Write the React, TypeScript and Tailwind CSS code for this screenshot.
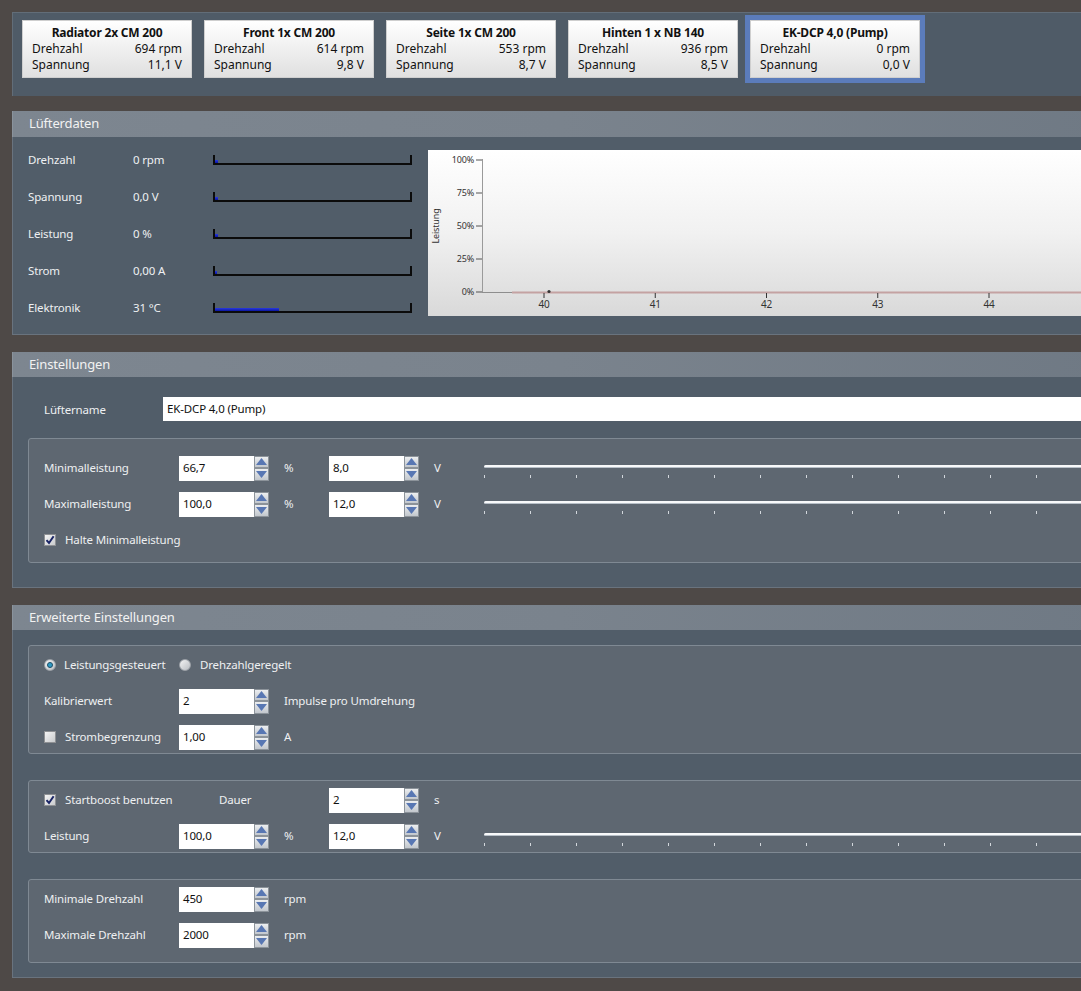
import React from 'react';

const FONT = '"Noto Sans", "Open Sans", Arial, sans-serif';

const fans = [
  { name: 'Radiator 2x CM 200', rpm: '694 rpm', volt: '11,1 V' },
  { name: 'Front 1x CM 200', rpm: '614 rpm', volt: '9,8 V' },
  { name: 'Seite 1x CM 200', rpm: '553 rpm', volt: '8,7 V' },
  { name: 'Hinten 1 x NB 140', rpm: '936 rpm', volt: '8,5 V' },
  { name: 'EK-DCP 4,0 (Pump)', rpm: '0 rpm', volt: '0,0 V', active: true },
];

const readings = [
  { label: 'Drehzahl', value: '0 rpm', fill: 3 },
  { label: 'Spannung', value: '0,0 V', fill: 3 },
  { label: 'Leistung', value: '0 %', fill: 3 },
  { label: 'Strom', value: '0,00 A', fill: 2 },
  { label: 'Elektronik', value: '31 °C', fill: 64 },
];

function FanCard({ name, rpm, volt, active }: { name: string; rpm: string; volt: string; active?: boolean }) {
  return (
    <div
      className={
        'w-[170px] h-[58px] shrink-0 bg-gradient-to-b from-white to-[#e0e0e0] border border-[#cfcfcf] px-[9px] pt-[4px] text-[12px] leading-[16px] text-[#111] ' +
        (active ? 'ring-[5px] ring-[#5b7cbb]' : '')
      }
    >
      <div className="text-center font-bold tracking-[-0.2px]">{name}</div>
      <div className="flex justify-between">
        <span>Drehzahl</span>
        <span>{rpm}</span>
      </div>
      <div className="flex justify-between">
        <span>Spannung</span>
        <span>{volt}</span>
      </div>
    </div>
  );
}

function PanelHeader({ title, h = 'h-[25px]' }: { title: string; h?: string }) {
  return (
    <div
      className={
        h +
        ' flex items-center pl-[16px] bg-gradient-to-r from-[#7d8690] via-[#7a838d] to-[#6f7984] border-l border-[#8a939c] text-[13px] text-[#f2f2f2]'
      }
    >
      {title}
    </div>
  );
}

function Meter({ fill }: { fill: number }) {
  return (
    <div className="relative w-[199px] h-[10px] border-l-2 border-r-2 border-b-2 border-[#0b0b0b]">
      <div className="absolute left-0 bottom-0 h-[3px] bg-gradient-to-b from-[#2a3ae0] to-[#0a14a0]" style={{ width: fill }} />
    </div>
  );
}

function Chart() {
  const xs = [40, 41, 42, 43, 44];
  const ys = [
    { t: '100%', y: 10 },
    { t: '75%', y: 43 },
    { t: '50%', y: 76 },
    { t: '25%', y: 109 },
    { t: '0%', y: 142 },
  ];
  return (
    <div className="mt-[13px] w-[660px] h-[166px] bg-gradient-to-b from-white via-[#f1f1f1] to-[#d9d9d9]">
      <svg width="660" height="166" viewBox="0 0 660 166" style={{ fontFamily: FONT }}>
        <text x="11" y="76" fontSize="9" fill="#333" textAnchor="middle" transform="rotate(-90 11 76)">
          Leistung
        </text>
        {ys.map((r) => (
          <g key={r.t}>
            <text x="46" y={r.y + 3} fontSize="9" fill="#333" textAnchor="end">
              {r.t}
            </text>
            <line x1="48" x2="54" y1={r.y} y2={r.y} stroke="#555" strokeWidth="1" />
          </g>
        ))}
        <line x1="54.5" x2="54.5" y1="9" y2="142" stroke="#9a9a9a" strokeWidth="1" />
        <line x1="54" x2="84" y1="142.5" y2="142.5" stroke="#8e8e8e" strokeWidth="1" />
        <line x1="84" x2="660" y1="142.5" y2="142.5" stroke="#c4a2a2" strokeWidth="2" />
        <circle cx="121" cy="141.5" r="1.6" fill="#333" />
        {xs.map((v, i) => {
          const x = 116 + i * 111.25;
          return (
            <g key={v}>
              <line x1={x} x2={x} y1="143" y2="148" stroke="#333" strokeWidth="1" />
              <text x={x} y="158" fontSize="10" fill="#333" textAnchor="middle">
                {v}
              </text>
            </g>
          );
        })}
      </svg>
    </div>
  );
}

function Spinner({ value }: { value: string }) {
  return (
    <div className="flex h-[25px] w-[90px] shrink-0">
      <div className="w-[75px] h-full bg-white pl-[4px] flex items-center text-[#111]">{value}</div>
      <div className="w-[15px] h-full flex flex-col">
        {[0, 1].map((d) => (
          <div
            key={d}
            className="h-1/2 flex items-center justify-center bg-gradient-to-b from-[#eceef0] to-[#c2c7cd] border border-[#8c939a]"
          >
            <svg width="11" height="7" viewBox="0 0 11 7">
              <polygon points={d === 0 ? '0,7 5.5,0 11,7' : '0,0 5.5,7 11,0'} fill="#5877b3" />
            </svg>
          </div>
        ))}
      </div>
    </div>
  );
}

function Check({ checked }: { checked?: boolean }) {
  return (
    <div className="w-[12px] h-[12px] shrink-0 border border-[#8f9194] bg-gradient-to-br from-[#f4f4f4] to-[#c9cbcd] flex items-center justify-center">
      {checked && (
        <svg width="10" height="10" viewBox="0 0 10 10">
          <path d="M1.5 5.2 L4 8 L8.6 1.2" stroke="#1a2566" strokeWidth="2" fill="none" />
        </svg>
      )}
    </div>
  );
}

function Radio({ checked }: { checked?: boolean }) {
  return (
    <div className="w-[12px] h-[12px] shrink-0 rounded-full border border-[#9da2a8] bg-gradient-to-br from-[#f4f4f4] to-[#b9bdc2] flex items-center justify-center">
      {checked && <div className="w-[6px] h-[6px] rounded-full bg-[#2f9ac4] border border-[#1d4d66]" />}
    </div>
  );
}

function Slider() {
  return (
    <div className="flex-1 h-full flex flex-col pt-[10px]">
      <div className="h-[3px] bg-[#f8f9fa] rounded-l-full border-b border-[#b8c0c8]" />
      <div className="mt-[7px] flex">
        {Array.from({ length: 14 }).map((_, i) => (
          <div key={i} className="w-[46px] h-[3px] border-l border-[#d2d7dc] shrink-0" />
        ))}
      </div>
    </div>
  );
}

function Row({ children }: { children: React.ReactNode }) {
  return <div className="h-[26px] flex items-center">{children}</div>;
}

function Label({ children, w = 'w-[135px]' }: { children: React.ReactNode; w?: string }) {
  return <div className={w + ' shrink-0 whitespace-nowrap flex items-center'}>{children}</div>;
}

function Unit({ children, w = 'w-[60px]' }: { children?: React.ReactNode; w?: string }) {
  return <div className={w + ' shrink-0 pl-[15px] whitespace-nowrap'}>{children}</div>;
}

function Group({ children, className }: { children: React.ReactNode; className: string }) {
  return (
    <div className={'border border-[#7f8993] rounded-[3px] bg-[#5e6771] pl-[15px] flex flex-col gap-[10px] ' + className}>
      {children}
    </div>
  );
}

export default function App() {
  return (
    <div
      className="w-[1081px] h-[991px] overflow-hidden bg-[#4e4947] pl-[12px] pt-[12px] text-[11.5px] tracking-[-0.15px] text-[#eef0f2]"
      style={{ fontFamily: FONT }}
    >
      <div className="w-[1100px]">
        {/* fan tiles */}
        <div className="h-[84px] bg-[#4f5b67] border-t border-l border-[#626d78] flex gap-[12px] pl-[9px] pt-[7px] tracking-normal">
          {fans.map((f) => (
            <FanCard key={f.name} {...f} />
          ))}
        </div>

        {/* Lüfterdaten */}
        <div className="mt-[15px]">
          <PanelHeader title="Lüfterdaten" h="h-[26px]" />
          <div className="h-[198px] bg-[#515d69] border-l border-b border-[#69737e] flex">
            <div className="w-[415px] shrink-0 pl-[15px] pt-[15px] flex flex-col gap-[21px]">
              {readings.map((r) => (
                <div key={r.label} className="h-[16px] flex items-center">
                  <div className="w-[105px]">{r.label}</div>
                  <div className="w-[80px]">{r.value}</div>
                  <Meter fill={r.fill} />
                </div>
              ))}
            </div>
            <Chart />
          </div>
        </div>

        {/* Einstellungen */}
        <div className="mt-[17px]">
          <PanelHeader title="Einstellungen" />
          <div className="h-[211px] bg-[#515d69] border-l border-b border-[#69737e] pl-[15px] pt-[20px]">
            <div className="h-[24px] flex items-center">
              <div className="w-[135px] pl-[16px] pt-[2px] shrink-0">Lüftername</div>
              <div className="flex-1 h-full bg-white pl-[4px] flex items-center text-[#111]">EK-DCP 4,0 (Pump)</div>
            </div>
            <Group className="mt-[17px] h-[125px] pt-[16px]">
              <Row>
                <Label>Minimalleistung</Label>
                <Spinner value="66,7" />
                <Unit>%</Unit>
                <Spinner value="8,0" />
                <Unit w="w-[65px]">V</Unit>
                <Slider />
              </Row>
              <Row>
                <Label>Maximalleistung</Label>
                <Spinner value="100,0" />
                <Unit>%</Unit>
                <Spinner value="12,0" />
                <Unit w="w-[65px]">V</Unit>
                <Slider />
              </Row>
              <Row>
                <Label>
                  <Check checked />
                  <span className="ml-[9px]">Halte Minimalleistung</span>
                </Label>
              </Row>
            </Group>
          </div>
        </div>

        {/* Erweiterte Einstellungen */}
        <div className="mt-[17px]">
          <PanelHeader title="Erweiterte Einstellungen" />
          <div className="h-[348px] bg-[#515d69] border-l border-b border-[#69737e] pl-[15px] pt-[15px]">
            <Group className="h-[109px] pt-[6px]">
              <Row>
                <Label>
                  <Radio checked />
                  <span className="ml-[8px]">Leistungsgesteuert</span>
                </Label>
                <Radio />
                <span className="ml-[9px]">Drehzahlgeregelt</span>
              </Row>
              <Row>
                <Label>Kalibrierwert</Label>
                <Spinner value="2" />
                <Unit w="w-[200px]">Impulse pro Umdrehung</Unit>
              </Row>
              <Row>
                <Label>
                  <Check />
                  <span className="ml-[9px]">Strombegrenzung</span>
                </Label>
                <Spinner value="1,00" />
                <Unit>A</Unit>
              </Row>
            </Group>

            <Group className="mt-[26px] h-[73px] pt-[6px]">
              <Row>
                <Label>
                  <Check checked />
                  <span className="ml-[9px]">Startboost benutzen</span>
                </Label>
                <div className="w-[150px] shrink-0 pl-[40px]">Dauer</div>
                <Spinner value="2" />
                <Unit w="w-[65px]">s</Unit>
              </Row>
              <Row>
                <Label>Leistung</Label>
                <Spinner value="100,0" />
                <Unit>%</Unit>
                <Spinner value="12,0" />
                <Unit w="w-[65px]">V</Unit>
                <Slider />
              </Row>
            </Group>

            <Group className="mt-[26px] h-[84px] pt-[6px]">
              <Row>
                <Label>Minimale Drehzahl</Label>
                <Spinner value="450" />
                <Unit>rpm</Unit>
              </Row>
              <Row>
                <Label>Maximale Drehzahl</Label>
                <Spinner value="2000" />
                <Unit>rpm</Unit>
              </Row>
            </Group>
          </div>
        </div>
      </div>
    </div>
  );
}
